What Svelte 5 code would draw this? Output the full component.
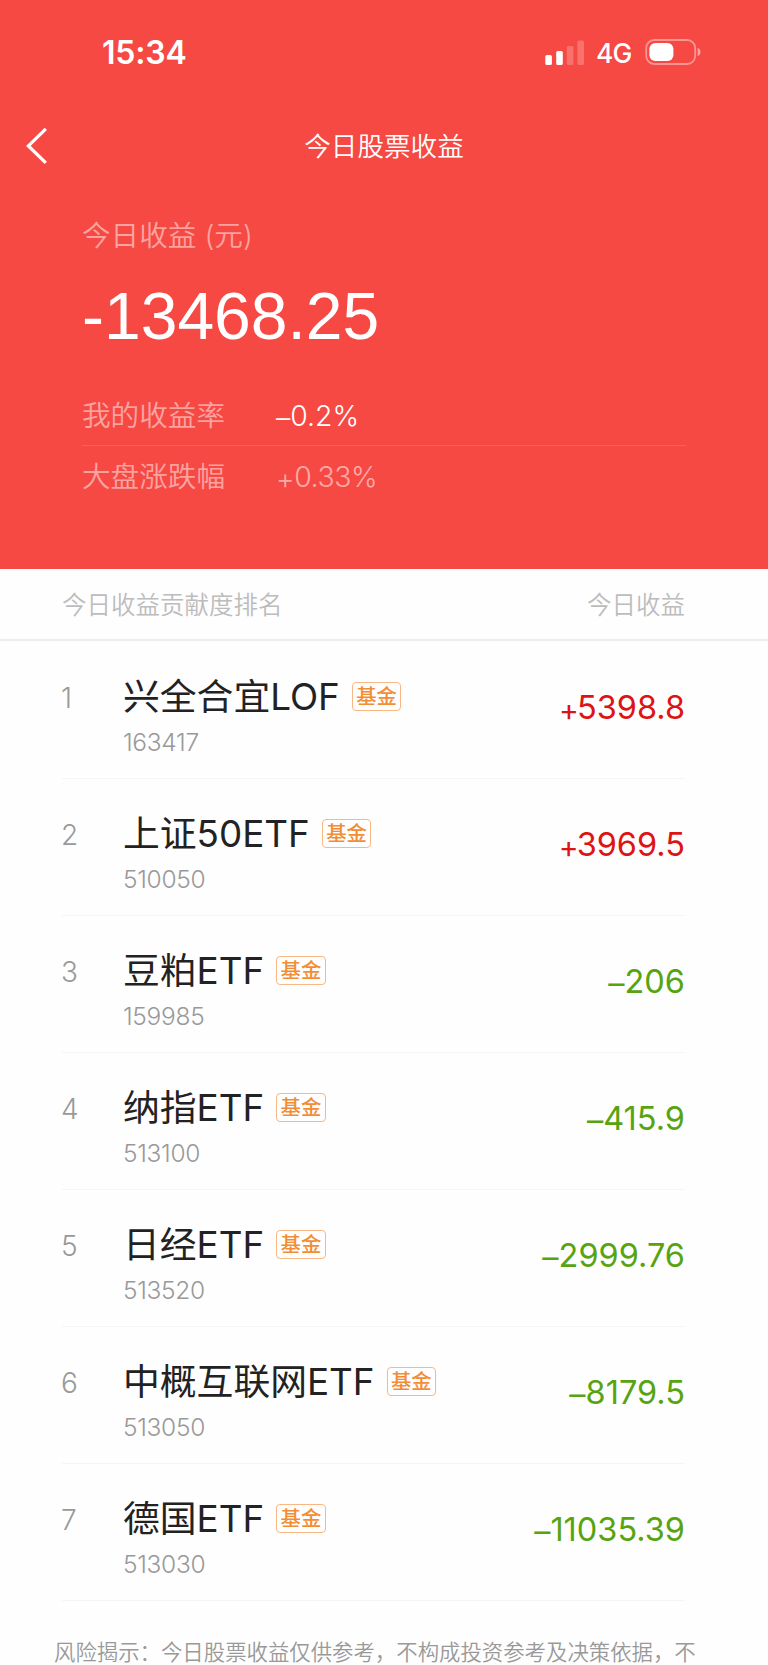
<script lang="ts">
  type Holding = {
    name: string;
    code: string;
    profit: string;
  };

  const holdings: Holding[] = [
    { name: '兴全合宜LOF', code: '163417', profit: '+5398.8' },
    { name: '上证50ETF', code: '510050', profit: '+3969.5' },
    { name: '豆粕ETF', code: '159985', profit: '–206' },
    { name: '纳指ETF', code: '513100', profit: '–415.9' },
    { name: '日经ETF', code: '513520', profit: '–2999.76' },
    { name: '中概互联网ETF', code: '513050', profit: '–8179.5' },
    { name: '德国ETF', code: '513030', profit: '–11035.39' },
  ];
</script>

<div class="screen">
  <header class="hero">
    <div class="status">
      <span class="time">15:34</span>
      <div class="status-right">
        <svg class="signal" width="40" height="26" viewBox="0 0 40 26" fill="#fff">
          <rect x="0.3" y="15" width="6.6" height="10" rx="1.6" />
          <rect x="11.2" y="11" width="6.6" height="14" rx="1.6" />
          <rect x="21.8" y="6" width="6.6" height="19" rx="1.6" opacity="0.22" />
          <rect x="32.4" y="0.6" width="6.6" height="24.4" rx="1.6" opacity="0.22" />
        </svg>
        <span class="network">4G</span>
        <svg class="battery" width="56" height="27" viewBox="0 0 56 27">
          <rect
            x="1.2"
            y="1"
            width="49"
            height="24"
            rx="8"
            fill="none"
            stroke="#fff"
            stroke-opacity="0.42"
            stroke-width="1.8"
          />
          <rect x="4.4" y="4" width="24" height="18" rx="5.8" fill="#fff" />
          <path d="M52.6 8.8c1.9.8 2.9 2.3 2.9 4.2s-1 3.4-2.9 4.2z" fill="#fff" opacity="0.5" />
        </svg>
      </div>
    </div>

    <nav class="nav">
      <button class="back" type="button" aria-label="返回">
        <svg width="24" height="38" viewBox="0 0 24 38" fill="none" stroke="#fff" stroke-width="3.3">
          <path d="M20.8 1.9 3.4 18.9 20.8 35.9" />
        </svg>
      </button>
      <h1>今日股票收益</h1>
    </nav>

    <div class="summary">
      <div class="label">今日收益 (元)</div>
      <div class="total">-13468.25</div>
      <div class="rate">
        <span class="label">我的收益率</span>
        <span class="value"><span class="sign">–</span>0.2%</span>
      </div>
      <div class="rate market">
        <span class="label">大盘涨跌幅</span>
        <span class="value"><span class="sign">+</span>0.33%</span>
      </div>
    </div>
  </header>

  <div class="list-head">
    <span>今日收益贡献度排名</span>
    <span>今日收益</span>
  </div>

  <ol class="list">
    {#each holdings as h, i (h.code)}
      <li class="row">
        <span class="rank">{i + 1}</span>
        <div class="info">
          <div class="title">
            <span class="name">{h.name}</span>
            <span class="tag">基金</span>
          </div>
          <div class="code">{h.code}</div>
        </div>
        <span class="profit" class:up={h.profit.startsWith('+')}
          ><span class="sign">{h.profit[0]}</span>{h.profit.slice(1)}</span
        >
      </li>
    {/each}
  </ol>

  <p class="notice">风险揭示：今日股票收益仅供参考，不构成投资参考及决策依据，不</p>
</div>

<style>
  :global(body) {
    background: #fefefe;
  }
  .screen {
    height: 1665px;
    overflow: hidden;
    background: #fefefe;
    font-family: Inter, 'Noto Sans CJK SC', sans-serif;
    font-weight: 350;
    white-space: nowrap;
  }
  .hero {
    height: 568.5px;
    box-sizing: border-box;
    background: #f64944;
    color: #fff;
  }
  .status {
    height: 105px;
    box-sizing: border-box;
    padding: 0 67px 0 102px;
    display: flex;
    justify-content: space-between;
    align-items: center;
  }
  .time {
    font-size: 32px;
    font-weight: 600;
    letter-spacing: -0.2px;
  }
  .status-right {
    display: flex;
    align-items: center;
  }
  .signal {
    margin-right: 11px;
  }
  .network {
    font-size: 26.5px;
    font-weight: 450;
    letter-spacing: -0.8px;
    margin-right: 13.5px;
  }
  .nav {
    height: 81px;
    display: grid;
    grid-template-columns: 60px 1fr 60px;
    align-items: center;
  }
  .back {
    padding: 0 0 0 25px;
    border: 0;
    background: none;
    display: flex;
  }
  h1 {
    margin: 0;
    text-align: center;
    font-size: 26.6px;
    font-weight: 350;
    line-height: 40px;
  }
  .summary {
    margin: 0 82px;
    padding-top: 30px;
  }
  .label {
    font-size: 28.6px;
    line-height: 40px;
    color: rgba(255, 255, 255, 0.5);
  }
  .total {
    height: 131px;
    font-family: 'Liberation Sans', Arial, sans-serif;
    font-size: 66px;
    font-weight: 400;
    line-height: 120px;
  }
  .rate {
    display: flex;
    align-items: center;
    height: 58px;
    border-bottom: 1.5px solid rgba(255, 255, 255, 0.12);
  }
  .rate .label {
    width: 194px;
  }
  .value {
    font-size: 28.4px;
    line-height: 40px;
  }
  .market {
    height: 62px;
    border: 0;
  }
  .market .value {
    letter-spacing: -0.4px;
    color: rgba(255, 255, 255, 0.55);
  }
  .sign {
    line-height: 1;
    vertical-align: -2px;
  }
  .list-head {
    height: 72.5px;
    box-sizing: border-box;
    padding: 0 83px 0 62px;
    border-bottom: 2px solid #ededed;
    display: flex;
    justify-content: space-between;
    align-items: center;
    font-size: 24.5px;
    color: #bcbcbc;
  }
  .list {
    margin: 0 83px 0 62px;
    padding: 1px 0 0;
    list-style: none;
  }
  .row {
    height: 137px;
    box-sizing: border-box;
    border-bottom: 1.5px solid #f5f5f5;
    display: flex;
  }
  .rank {
    width: 62px;
    margin-left: -1px;
    padding-top: 36px;
    font-size: 28px;
    line-height: 40px;
    color: #999;
  }
  .info {
    flex: 1;
    padding-top: 30.5px;
  }
  .title {
    display: flex;
    align-items: center;
    height: 48px;
    gap: 12px;
  }
  .name {
    font-size: 36.8px;
    font-weight: 380;
    line-height: 48px;
    color: #222;
  }
  .tag {
    width: 49.5px;
    height: 29.5px;
    box-sizing: border-box;
    border: 1.5px solid #f9b783;
    border-radius: 4px;
    font-size: 20.4px;
    font-weight: 500;
    line-height: 27px;
    text-align: center;
    color: #f28d35;
  }
  .code {
    margin-top: 5.5px;
    font-size: 24.5px;
    line-height: 32px;
    letter-spacing: -0.3px;
    color: #999;
  }
  .profit {
    padding-top: 45px;
    font-size: 32.5px;
    font-weight: 370;
    line-height: 42px;
    color: #58a410;
  }
  .profit.up {
    color: #de1414;
  }
  /* the plus is wider than the dash, pull it in so both line up */
  .up .sign {
    font-size: 30px;
    letter-spacing: -2px;
  }
  .notice {
    margin: 35px 0 0 54px;
    font-size: 21.4px;
    line-height: 32px;
    color: #999;
  }
</style>
